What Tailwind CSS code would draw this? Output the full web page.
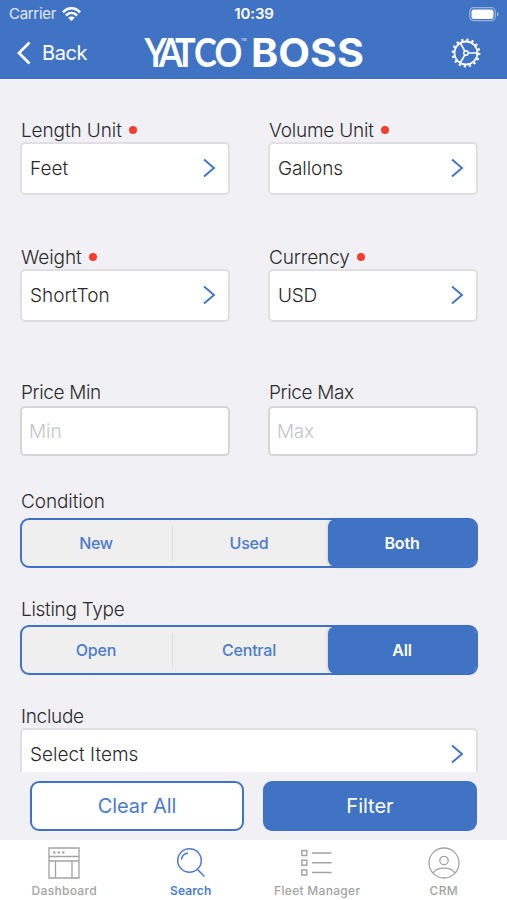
<!DOCTYPE html>
<html lang="en">
<head>
<meta charset="utf-8">
<title>YATCO BOSS</title>
<script src="https://cdn.jsdelivr.net/npm/@tailwindcss/browser@4"></script>
</head>
<body class="w-[507px] h-[900px] overflow-hidden bg-[#f1f0f5] font-['Inter',sans-serif] text-[#2a2a2d] flex flex-col">
<header class="h-[79px] shrink-0 bg-[#4173c5] text-white flex flex-col">
  <div class="h-[27px] grid grid-cols-3 items-center pt-[1px] pl-[9px] pr-[8px]">
    <div class="flex items-center gap-[6px] text-[15px] text-white/85"><span class="tracking-[-0.3px]">Carrier</span>
      <svg width="19" height="15" viewBox="0 0 19 15" fill="none" stroke="#fff" stroke-width="2.5"><path d="M1 5.3C6-.1 13-.1 18 5.3M4 8.5c3.3-3.3 7.700-3.300 11 0"/><path d="M6.200 10.800c2-1.800 4.600-1.800 6.600 0L9.500 14z" fill="#fff" stroke="none"/></svg>
    </div>
    <div class="text-center text-[15px] font-semibold tracking-[-0.1px]">10:39</div>
    <svg class="justify-self-end" width="30" height="15" viewBox="0 0 30 15"><rect x=".7" y=".7" width="25.600" height="13" rx="4" fill="none" stroke="#fff" stroke-opacity=".45" stroke-width="1.200"/><rect x="2.500" y="2.500" width="22" height="9.500" rx="2.300" fill="#fff"/><path d="M28 5v4.500q1.500-.6 1.500-2.250T28 5" fill="#fff" fill-opacity=".5"/></svg>
  </div>
  <div class="h-[52px] flex items-center pl-[17px] pr-[26px]">
    <div class="flex items-center gap-[11px] w-[127px]">
      <svg width="14" height="24" viewBox="0 0 14 24" fill="none" stroke="#fff" stroke-width="2.800"><path d="M12.500 1.500 2 12l10.500 10.500"/></svg>
      <span class="text-[20px] tracking-[-0.4px]">Back</span>
    </div>
    <svg class="overflow-visible" width="222" height="40" viewBox="0 0 222 40" fill="#fff">
      <text transform="translate(.5 33.500) scale(.87 1)" x="0 16.500 35 57 80.500" y="0" font-family="Lato, sans-serif" font-size="39.500" font-weight="700">YATCO</text>
      <text x="97" y="7.500" font-family="Inter, sans-serif" font-size="3.500">TM</text>
      <text x="107" y="33.500" font-family="Inter, sans-serif" font-size="39" font-weight="700" textLength="113" lengthAdjust="spacingAndGlyphs">BOSS</text>
    </svg>
    <svg class="ml-auto" width="30" height="30" viewBox="-15 -15 30 30" fill="none" stroke="#fff"><circle r="13.300" stroke-width="2.200" stroke-dasharray="2.200 3.022"/><circle r="11.500" stroke-width="1.800"/><circle r="2.200" stroke-width="1.500"/><path d="M2.200 0H11M-1.100-1.900-5.700-9.900M-1.100 1.900-5.700 9.900" stroke-width="1.700"/></svg>
  </div>
</header>
<main class="h-[693px] shrink-0 overflow-hidden pt-[39px] px-[20px]">
  <div class="w-[458px] grid grid-cols-[210px_210px] justify-between text-[19px] font-light">
    <div class="h-[127px]">
      <div class="h-[24px] flex items-center gap-[7px] pl-[1px]"><span class="tracking-[-0.1px] pt-[2px]">Length Unit</span><i class="size-2 rounded-full bg-[#fb3b30]"></i></div>
      <div class="h-[53px] rounded-[5px] border-2 border-[#dfdfe2] bg-white flex items-center justify-between pl-[8px] pr-[12px]"><span class="pt-[2px]">Feet</span><svg class="mb-[1px]" width="14" height="20" viewBox="0 0 14 20" fill="none" stroke="#4173c5" stroke-width="1.900"><path d="m2 1.500 10 8.500L2 18.500"/></svg></div>
    </div>
    <div class="h-[127px]">
      <div class="h-[24px] flex items-center gap-[7px] pl-[1px]"><span class="tracking-[-0.2px] pt-[2px]">Volume Unit</span><i class="size-2 rounded-full bg-[#fb3b30]"></i></div>
      <div class="h-[53px] rounded-[5px] border-2 border-[#dfdfe2] bg-white flex items-center justify-between pl-[8px] pr-[12px]"><span class="pt-[2px] tracking-[-0.1px]">Gallons</span><svg class="mb-[1px]" width="14" height="20" viewBox="0 0 14 20" fill="none" stroke="#4173c5" stroke-width="1.900"><path d="m2 1.500 10 8.500L2 18.500"/></svg></div>
    </div>
    <div class="h-[135px]">
      <div class="h-[24px] flex items-center gap-[7px] pl-[1px]"><span class="tracking-[-0.1px] pt-[2px]">Weight</span><i class="size-2 rounded-full bg-[#fb3b30]"></i></div>
      <div class="h-[53px] rounded-[5px] border-2 border-[#dfdfe2] bg-white flex items-center justify-between pl-[8px] pr-[12px]"><span class="pt-[2px]">ShortTon</span><svg class="mb-[1px]" width="14" height="20" viewBox="0 0 14 20" fill="none" stroke="#4173c5" stroke-width="1.900"><path d="m2 1.500 10 8.500L2 18.500"/></svg></div>
    </div>
    <div class="h-[135px]">
      <div class="h-[24px] flex items-center gap-[7px] pl-[1px]"><span class="tracking-[-0.1px] pt-[2px]">Currency</span><i class="size-2 rounded-full bg-[#fb3b30]"></i></div>
      <div class="h-[53px] rounded-[5px] border-2 border-[#dfdfe2] bg-white flex items-center justify-between pl-[8px] pr-[12px]"><span class="pt-[2px] tracking-[-0.2px]">USD</span><svg class="mb-[1px]" width="14" height="20" viewBox="0 0 14 20" fill="none" stroke="#4173c5" stroke-width="1.900"><path d="m2 1.500 10 8.500L2 18.500"/></svg></div>
    </div>
    <div class="h-[109px]">
      <div class="h-[26px] pl-[1px] leading-[26px] tracking-[-0.35px]">Price Min</div>
      <div class="h-[50px] rounded-[5px] border-2 border-[#d6d6d9] bg-white flex items-center pl-[7px] pt-[2px] text-[#c5c5c8]">Min</div>
    </div>
    <div class="h-[109px]">
      <div class="h-[26px] pl-[1px] leading-[26px] tracking-[-0.35px]">Price Max</div>
      <div class="h-[50px] rounded-[5px] border-2 border-[#d6d6d9] bg-white flex items-center pl-[7px] pt-[2px] tracking-[-0.3px] text-[#c5c5c8]">Max</div>
    </div>
  </div>
  <section class="h-[108px] w-[458px]">
    <div class="h-[29px] pl-[1px] text-[19px] leading-[26px] tracking-[-0.1px] font-light">Condition</div>
    <div class="h-[50px] rounded-[9px] bg-[#efefef] border-[2.500px] border-[#4173c5] flex items-center text-[16px] font-medium text-[#4d7bcb]">
      <div class="w-[150px] pr-[2px] text-center tracking-[-0.3px]">New</div>
      <div class="w-px h-[35px] bg-[#dcdcdf]"></div>
      <div class="w-[155px] pr-[3px] text-center tracking-[-0.2px]">Used</div>
      <div class="flex-1 h-[48px] rounded-[8px] bg-[#4173c5] shadow-[-1px_0_3px_#0002] text-white font-semibold tracking-[-0.2px] flex items-center justify-center">Both</div>
    </div>
  </section>
  <section class="h-[107px] w-[458px]">
    <div class="h-[28px] pl-[1px] text-[19px] leading-[26px] tracking-[-0.3px] font-light">Listing Type</div>
    <div class="h-[50px] rounded-[9px] bg-[#efefef] border-[2.500px] border-[#4173c5] flex items-center text-[16px] font-medium text-[#4d7bcb]">
      <div class="w-[150px] pr-[2px] text-center tracking-[-0.2px]">Open</div>
      <div class="w-px h-[35px] bg-[#dcdcdf]"></div>
      <div class="w-[155px] pr-[3px] text-center tracking-[-0.2px]">Central</div>
      <div class="flex-1 h-[48px] rounded-[8px] bg-[#4173c5] shadow-[-1px_0_3px_#0002] text-white font-semibold tracking-[-0.2px] flex items-center justify-center">All</div>
    </div>
  </section>
  <section class="w-[458px] text-[19px] font-light">
    <div class="h-[24px] pl-[1px] leading-[26px] tracking-[-0.3px]">Include</div>
    <div class="h-[53px] rounded-[5px] border-2 border-[#dfdfe2] bg-white flex items-center justify-between pl-[8px] pr-[12px]"><span class="pt-[2px]">Select Items</span><svg class="mb-[1px]" width="14" height="20" viewBox="0 0 14 20" fill="none" stroke="#4173c5" stroke-width="1.900"><path d="m2 1.500 10 8.500L2 18.500"/></svg></div>
  </section>
</main>
<div class="h-[68px] shrink-0 flex gap-[19px] pl-[30px] pt-[9px] text-[20px]">
  <button class="w-[214px] h-[50px] rounded-[9px] border-[2.500px] border-[#4173c5] bg-white text-[#4d7bcb]"><span class="tracking-[-0.1px]">Clear All</span></button>
  <button class="w-[214px] h-[50px] rounded-[9px] bg-[#4173c5] text-white">Filter</button>
</div>
<nav class="h-[60px] shrink-0 bg-white grid grid-cols-4 pl-[1px] text-[12px] font-medium text-[#a3a3a3] tracking-[0.3px]">
  <div class="flex flex-col items-center pt-[7px] gap-[3px]">
    <svg width="32" height="32" viewBox="0 0 32 32" fill="none" stroke="currentColor" stroke-width="1.300"><path d="M1 1h30v30H1zM1 9.500h30M1 14h30M7.500 14v17M24 14v17"/><path d="M5 5.500h2.500M9.500 5.500H12M14 5.500h2.500" stroke-width="2"/></svg>
    <span>Dashboard</span></div>
  <div class="flex flex-col items-center pt-[7px] gap-[3px] text-[#4d7bcb] font-semibold tracking-[0.1px]">
    <svg width="32" height="32" viewBox="0 0 32 32" fill="none" stroke="currentColor" stroke-width="1.500"><circle cx="14.500" cy="13.500" r="11.800"/><path d="m22.500 22.500 7 7M6.500 12.500c.5-3.500 3-6 6.500-6.500" /></svg>
    <span>Search</span></div>
  <div class="flex flex-col items-center pt-[7px] gap-[3px]">
    <svg width="32" height="32" viewBox="0 0 32 32" fill="none" stroke="currentColor" stroke-width="1.400"><path d="M.8 3.500h5v5h-5zM.8 13.300h5v5h-5zM.8 23h5v5h-5zM11 6h19.500M11 15.800h19.500M11 25.500h19.500"/></svg>
    <span>Fleet Manager</span></div>
  <div class="flex flex-col items-center pt-[7px] gap-[3px]">
    <svg width="32" height="32" viewBox="0 0 32 32" fill="none" stroke="currentColor" stroke-width="1.300"><circle cx="16" cy="16" r="15"/><circle cx="16" cy="13.500" r="4.200"/><path d="M5 26c4-6.500 18-6.500 22 0"/></svg>
    <span>CRM</span></div>
</nav>
</body>
</html>
